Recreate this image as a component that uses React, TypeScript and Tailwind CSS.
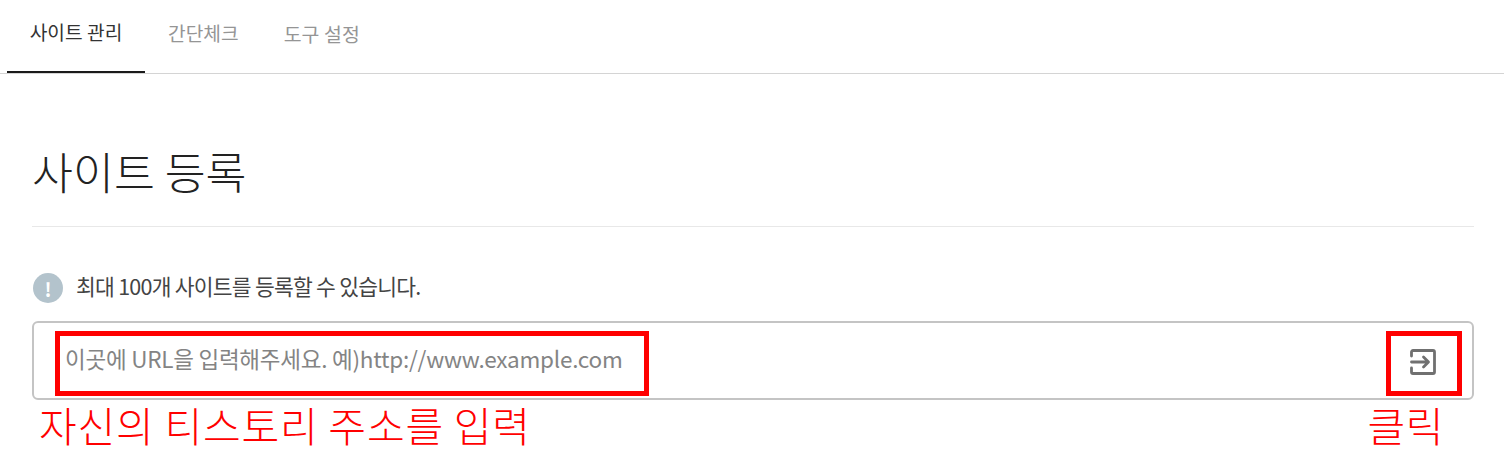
import React from "react";

const kr = "font-['Noto_Sans_CJK_KR','Noto_Sans',sans-serif]";

export default function App() {
  return (
    <div className={`w-[1504px] h-[473px] bg-white overflow-hidden ${kr}`}>
      <nav className="h-[74px] border-b border-b-[#d4d4d4] flex pl-[7px]">
        <div className="w-[138px] h-[73px] border-b-2 border-b-[#1a1a1a] flex items-center justify-center text-[19.2px] text-[#333] pb-[6px]">
          사이트 관리
        </div>
        <div className="ml-[23px] h-[73px] flex items-center text-[19.2px] text-[#959595] pb-[6px]">간단체크</div>
        <div className="ml-[45px] h-[73px] flex items-center text-[19.4px] tracking-[0.1px] text-[#959595] pb-[6px]">도구 설정</div>
      </nav>
      <main className="pl-[32px] pr-[30px]">
        <h1 className="h-[153px] pt-[65px] border-b border-b-[#e8e8e8] text-[44.5px] leading-[64px] font-light text-[#222] box-border">
          사이트 등록
        </h1>
        <div className="mt-[46px] flex items-center h-[30px] pl-[1px]">
          <span className="w-[30px] h-[30px] rounded-full bg-[#b3c3cc] text-white flex items-center justify-center text-[19px] font-bold leading-none">!</span>
          <span className="ml-[13px] pb-[3px] text-[21.5px] tracking-[-0.75px] text-[#444]">최대 100개 사이트를 등록할 수 있습니다.</span>
        </div>
        <div className="relative mt-[18px] h-[79px] border-2 border-[#c4c4c4] rounded-[6px] flex items-center justify-between pl-[31px] pr-[36px]">
          <span className="text-[22.5px] tracking-[-0.24px] text-[#848484] pb-[3px]">이곳에 URL을 입력해주세요. 예)http://www.example.com</span>
          <svg width="26" height="26" viewBox="0 0 26 26" fill="none" stroke="#707070" strokeWidth="2.8" strokeLinecap="round" strokeLinejoin="round" className="mt-[2px]">
            <path d="M1.500 7V3A1.500 1.500 0 0 1 3 1.500H23A1.500 1.500 0 0 1 24.500 3V23A1.500 1.500 0 0 1 23 24.500H3A1.500 1.500 0 0 1 1.500 23V19" />
            <path d="M1.500 13H18M13.500 8L18.500 13L13.500 18" />
          </svg>
          <div className="absolute left-[21px] top-[8px] w-[594px] h-[65px] border-[5px] border-[#ff0000]" />
          <div className="absolute left-[1352px] top-[8px] w-[76px] h-[65px] border-[5px] border-[#ff0000]" />
        </div>
        <div className="relative flex justify-between mt-[-1px] text-[#ff0000] font-light text-[41px] leading-[50px] pl-[7px] pr-[30px]">
          <span className="tracking-[0.8px]">자신의 티스토리 주소를 입력</span>
          <span className="tracking-[0.5px]">클릭</span>
        </div>
      </main>
    </div>
  );
}
